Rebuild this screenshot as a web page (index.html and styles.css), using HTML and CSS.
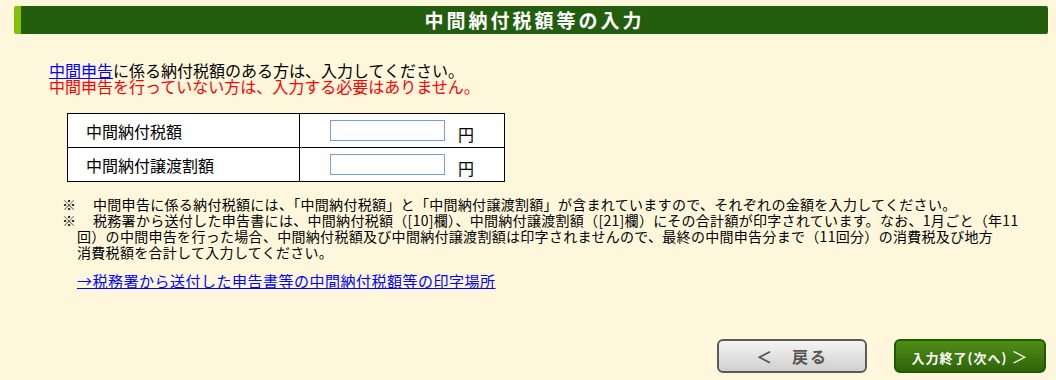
FILE: index.html
```html
<!DOCTYPE html>
<html lang="ja">

<head>
  <meta charset="UTF-8">
  <title>中間納付税額等の入力</title>
  <link rel="stylesheet" href="styles.css">
</head>

<body>
  <!-- Page Title -->
  <h1 class="page-title">中間納付税額等の入力</h1>

  <!-- Intro -->
  <div class="intro">
    <p><a href="#" class="link">中間申告</a>に係る納付税額のある方は、入力してください。</p>
    <p class="warn">中間申告を行っていない方は、入力する必要はありません。</p>
  </div>

  <!-- Input Table -->
  <table class="amount-table">
    <tr>
      <th>中間納付税額</th>
      <td><input type="text" class="amount-input"><span class="unit">円</span></td>
    </tr>
    <tr>
      <th>中間納付譲渡割額</th>
      <td><input type="text" class="amount-input"><span class="unit">円</span></td>
    </tr>
  </table>

  <!-- Notes -->
  <ul class="notes">
    <li><span class="mark">※</span>中間申告に係る納付税額には、「中間納付税額」と「中間納付譲渡割額」が含まれていますので、それぞれの金額を入力してください。</li>
    <li><span class="mark">※</span>税務署から送付した申告書には、中間納付税額（[10]欄）、中間納付譲渡割額（[21]欄）にその合計額が印字されています。なお、1月ごと（年11<br>回）の中間申告を行った場合、中間納付税額及び中間納付譲渡割額は印字されませんので、最終の中間申告分まで（11回分）の消費税及び地方<br>消費税額を合計して入力してください。</li>
  </ul>
  <p class="notes-link"><a href="#" class="link">→税務署から送付した申告書等の中間納付税額等の印字場所</a></p>

  <!-- Buttons -->
  <div class="button-row">
    <button class="btn btn-back">＜　戻る</button>
    <button class="btn btn-next">入力終了(次へ)<span class="arrow">＞</span></button>
  </div>
</body>

</html>
```

FILE: styles.css
```css
/* Root colours */
:root {
  --page-bg: #fff7dc;
  --title-bg: #225e0e;
  --title-edge: #86bf0a;
  --link-color: #0000ff;
  --warn-color: #ff0000;
}

* {
  margin: 0;
  padding: 0;
  box-sizing: border-box;
}

body {
  background: var(--page-bg);
  color: #000;
  font-family: "Noto Sans CJK JP", "Noto Sans", sans-serif;
  font-size: 16px;
  line-height: 16px;
}

/* Title bar */
.page-title {
  margin: 6px 8px 0 14px;
  height: 28px;
  background: var(--title-bg);
  border-left: 7px solid var(--title-edge);
  border-radius: 2px;
  color: #fff;
  font-size: 19px;
  font-weight: bold;
  letter-spacing: 3px;
  line-height: 28px;
  text-align: center;
}

/* Intro text */
.intro {
  margin: 28px 0 0 49px;
}

.link {
  color: var(--link-color);
  text-decoration: underline;
}

.warn {
  color: var(--warn-color);
}

/* Amount table */
.amount-table {
  margin: 19px 0 0 67px;
  border-collapse: collapse;
  background: #fff;
}

.amount-table th,
.amount-table td {
  border: 1px solid #000;
  height: 34px;
}

.amount-table th {
  width: 232px;
  padding-left: 18px;
  font-weight: normal;
  text-align: left;
}

.amount-table td {
  width: 205px;
  padding-left: 30px;
}

.amount-input {
  width: 115px;
  height: 21px;
  border: 1px solid #7d9be0;
  background: #fff;
  vertical-align: middle;
}

.unit {
  display: inline-block;
  margin-left: 13px;
  vertical-align: -6px;
}

/* Notes */
.notes {
  list-style: none;
  margin: 14px 0 0 62px;
  font-size: 14px;
  line-height: 16px;
  letter-spacing: 0.3px;
}

.notes li {
  padding-left: 15px;
  white-space: nowrap;
}

.mark {
  display: inline-block;
  width: 31px;
  margin-left: -15px;
}

.notes-link {
  margin: 13px 0 0 77px;
  font-size: 15px;
  line-height: 16px;
  letter-spacing: 0.5px;
}

/* Buttons */
.button-row {
  display: flex;
  justify-content: flex-end;
  gap: 27px;
  margin: 50px 10px 0 0;
}

.btn {
  height: 34px;
  border-radius: 6px;
  font-family: "Noto Sans CJK JP", sans-serif;
  font-weight: bold;
  cursor: pointer;
}

.btn-back {
  width: 150px;
  border: 2px solid #5a5a5a;
  background: linear-gradient(#f4f4f4, #d0d0d0);
  color: #555;
  font-size: 16px;
  letter-spacing: 2px;
}

.btn-next {
  width: 152px;
  border: 2px solid #1e5a06;
  background: linear-gradient(#4f8e16, #2f6409);
  color: #fff;
  font-size: 13px;
  letter-spacing: 1px;
}

.btn-next .arrow {
  margin-left: 4px;
  font-size: 16px;
  font-weight: normal;
}
```
